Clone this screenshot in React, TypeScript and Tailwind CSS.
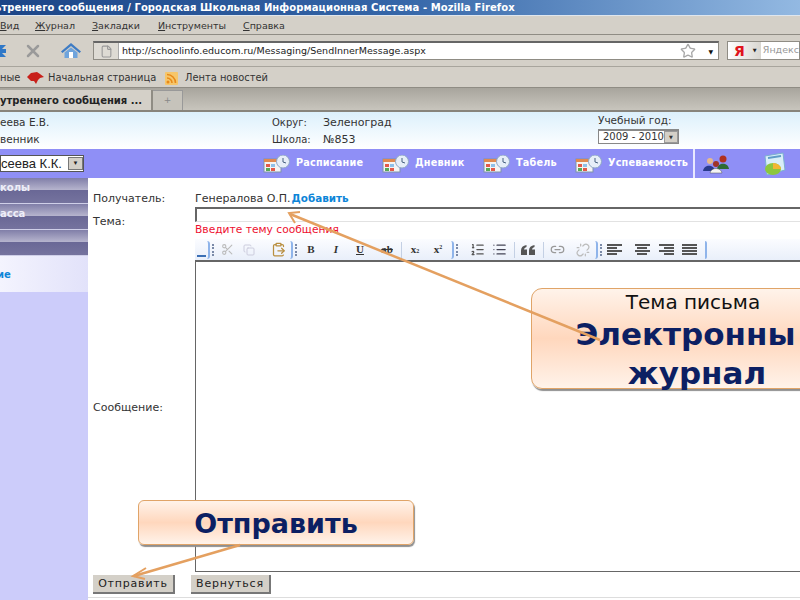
import React from 'react';
import { Star, X, File, Scissors, Copy, ClipboardPaste, ListOrdered, List, Link2, Unlink } from 'lucide-react';

const ScheduleIcon: React.FC = () => (
  <svg width="28" height="18" viewBox="0 0 28 18" className="shrink-0">
    <rect x="1" y="4" width="17" height="13" fill="#f4f4f4" stroke="#7f93a8" />
    <rect x="1" y="4" width="17" height="3" fill="#e08a50" />
    <rect x="3" y="9" width="4" height="3" fill="#e25a4a" />
    <rect x="8" y="9" width="4" height="3" fill="#8fc0e8" />
    <rect x="3" y="13" width="4" height="3" fill="#58a858" />
    <rect x="8" y="13" width="4" height="3" fill="#e25a4a" />
    <circle cx="20" cy="6.500" r="6.500" fill="#e6eef8" stroke="#8fa8c8" />
    <path d="M20 3v4l3 1" stroke="#46607f" fill="none" />
  </svg>
);

const PeopleIcon: React.FC = () => (
  <svg width="28" height="20" viewBox="0 0 28 20">
    <circle cx="8" cy="7" r="3" fill="#e8b98c" />
    <path d="M1 17c1-7 11-7 12 0z" fill="#2a3a8c" />
    <circle cx="21" cy="5" r="3.500" fill="#b03020" />
    <path d="M15 15c1-7 11-7 12 0z" fill="#2d6b35" />
    <circle cx="14" cy="10" r="3" fill="#a03428" />
    <path d="M8 19c1-6 11-6 12 0z" fill="#f4f4f4" stroke="#555" strokeWidth=".5" />
  </svg>
);

const ChartIcon: React.FC = () => (
  <svg width="26" height="24" viewBox="0 0 26 24">
    <path d="M4 4l18-3 2 17-18 5z" fill="#d8eef8" stroke="#7ab0d0" />
    <path d="M7 6l13-2" stroke="#5f9cc8" strokeWidth="2" />
    <ellipse cx="12" cy="17" rx="8" ry="6" fill="#8cc63f" />
    <path d="M12 17V11a8 6 0 0 1 8 6z" fill="#f2b632" />
  </svg>
);

const RssIcon: React.FC = () => (
  <svg width="13" height="13" viewBox="0 0 13 13">
    <rect width="13" height="13" rx="1" fill="#f6c66a" />
    <circle cx="3" cy="10" r="1.500" fill="#e88a1a" />
    <path d="M2 6a5 5 0 0 1 5 5M2 2.500a8.500 8.500 0 0 1 8.500 8.500" stroke="#e88a1a" strokeWidth="1.600" fill="none" />
  </svg>
);

const BirdIcon: React.FC = () => (
  <svg width="17" height="13" viewBox="0 0 17 13">
    <path d="M0 5l4-4 6-1 3 2 4 3-4 1-2 2-2 4-2-3-3 0z" fill="#c8201a" />
  </svg>
);

const HomeIcon: React.FC = () => (
  <svg width="20" height="17" viewBox="0 0 20 17">
    <path d="M10 1L0 9.500l1.500 1.500L10 4l8.500 7 1.500-1.500z" fill="#3f7cc4" />
    <path d="M3.500 10.500L10 5.500l6.500 5V16h-13z" fill="#6fa4dc" />
    <rect x="8" y="10" width="4" height="6" fill="#fff" />
  </svg>
);

const BackIcon: React.FC = () => (
  <svg width="6" height="16" viewBox="0 0 6 16">
    <path d="M0 2l6 0-4 4 4 0 0 4-4 0 4 4-6 0z" fill="#2f78c8" />
  </svg>
);

const QuoteIcon: React.FC = () => (
  <svg width="15" height="10" viewBox="0 0 15 10">
    <path d="M0 10V5.500C0 2.500 2 .5 5.500 0v2C4 2.500 3.200 3.500 3 4.500h3V10zM8 10V5.500C8 2.500 10 .5 13.500 0v2c-1.500.5-2.300 1.500-2.500 2.500h3V10z" fill="#555" />
  </svg>
);

const NavItem: React.FC<{ label: string; w: string }> = ({ label, w }) => (
  <div className={`flex items-center gap-[5px] ${w}`}>
    <ScheduleIcon />
    <span className="text-[9.7px] font-bold text-white tracking-[0.2px]">{label}</span>
  </div>
);

const SideItem: React.FC<{ label: string }> = ({ label }) => (
  <div className="h-[26px] bg-[linear-gradient(#807ea8_0%,#b4b2cc_46%,#6a6896_50%,#75739e_100%)] border-b border-[#cfcfe8] text-[10px] font-bold text-[#eeeef8] pt-[3px] leading-[14px] overflow-hidden">
    {label}
  </div>
);

const Sep: React.FC<{ className: string }> = ({ className }) => (
  <div className={`w-px h-[16px] bg-[#c4d0e4] shrink-0 ${className}`} />
);

// curved end of one toolbar group, followed by the dotted grip of the next
const Bracket: React.FC<{ className?: string }> = ({ className }) => (
  <div className={`flex items-center justify-between w-[9px] h-[18px] shrink-0 ${className ?? ''}`}>
    <div className="w-[3px] h-[18px] border-r-2 border-[#8fb4ea] rounded-r" />
    <div className="h-[12px] border-l-2 border-dotted border-[#7b8aa8] mr-[2px]" />
  </div>
);

const T: React.FC<{ children: React.ReactNode; className?: string }> = ({ children, className }) => (
  <span className={`flex items-center justify-center h-[18px] shrink-0 text-[11px] font-bold font-['Liberation_Serif',serif] ${className ?? 'w-[24px] text-[#333]'}`}>
    {children}
  </span>
);

const Lines: React.FC<{ kind: 'l' | 'c' | 'r' | 'j'; className?: string }> = ({ kind, className }) => {
  const rows = kind === 'j' ? [15, 15, 15, 15] : [15, 10, 15, 10];
  const align = kind === 'c' ? 'items-center' : kind === 'r' ? 'items-end' : 'items-start';
  return (
    <div className={`w-[22px] shrink-0 flex flex-col gap-[1px] px-[3px] ${align} ${className ?? ''}`}>
      {rows.map((w, i) => (
        <div key={i} className="h-[2px] bg-[#555]" style={{ width: w }} />
      ))}
    </div>
  );
};

const Callout: React.FC<{ className: string; children: React.ReactNode }> = ({ className, children }) => (
  <div className={`absolute border border-[#e0a468] bg-[linear-gradient(#fff3ea_0%,#ffd7bd_50%,#fff3ea_100%)] shadow-[1px_2px_1px_#8f8f8f] text-center font-['DejaVu_Sans',sans-serif] ${className}`}>
    {children}
  </div>
);

const App: React.FC = () => {
  return (
    <div className="relative w-[800px] h-[600px] overflow-hidden bg-white font-['DejaVu_Sans',sans-serif] text-[#222]">
      {/* title bar */}
      <div className="h-[16px] bg-[linear-gradient(90deg,#1c4587,#3566a8_50%,#93b9e2)] border-b border-[#dfe6ee] overflow-hidden">
        <div className="text-[10px] font-bold text-white leading-[15px] tracking-[0.08px] whitespace-nowrap -ml-[5px]">
          ьтреннего сообщения / Городская Школьная Информационная Система - Mozilla Firefox
        </div>
      </div>

      {/* menu */}
      <div className="h-[19px] pt-[2px] bg-[#d4d0c8] border-b border-[#8f8c84] flex items-center text-[9.5px] text-[#333] whitespace-nowrap">
        <span className="w-[35px]"><u>В</u>ид</span>
        <span className="w-[57px]"><u>Ж</u>урнал</span>
        <span className="w-[66px]"><u>З</u>акладки</span>
        <span className="w-[85px]"><u>И</u>нструменты</span>
        <span><u>С</u>правка</span>
      </div>

      {/* nav toolbar */}
      <div className="h-[32px] bg-[#d4d0c8] border-b border-[#a8a59d] flex items-center">
        <BackIcon />
        <X size={20} strokeWidth={3} className="text-[#9a9a9a] ml-[17px] mr-[18px]" />
        <HomeIcon />
        <div className="ml-[12px] w-[626px] h-[19px] bg-white border border-[#8f8c84] border-t-2 border-t-[#666] flex items-center">
          <div className="w-[25px] h-full bg-[#dedbd4] border-r border-[#aaa] flex items-center justify-center">
            <File size={13} className="text-[#999]" />
          </div>
          <span className="ml-[3px] text-[9.5px] text-[#222] flex-1">http://schoolinfo.educom.ru/Messaging/SendInnerMessage.aspx</span>
          <Star size={16} className="text-[#a8a8a8] mr-[12px]" />
          <span className="text-[6px] text-[#111] mr-[5px]">▼</span>
        </div>
        <div className="ml-[8px] flex-1 h-[19px] bg-white border border-[#8f8c84] flex items-center overflow-hidden whitespace-nowrap">
          <div className="w-[36px] h-full bg-[linear-gradient(90deg,#fff,#d8d6d0)] flex items-center pl-[6px] gap-[8px]">
            <span className="text-[14px] font-bold text-[#e0141c] leading-none">Я</span>
            <span className="text-[5px]">▼</span>
          </div>
          <span className="ml-[2px] text-[9.5px] text-[#999]">Яндекс</span>
        </div>
      </div>

      {/* bookmarks */}
      <div className="h-[21px] pt-[2px] bg-[#d4d0c8] border-b border-[#8f8c84] flex items-center text-[9.9px] text-[#333] whitespace-nowrap">
        <span className="w-[27px]">ные</span>
        <BirdIcon />
        <span className="ml-[4px] w-[117px]">Начальная страница</span>
        <RssIcon />
        <span className="ml-[7px]">Лента новостей</span>
      </div>

      {/* tabs */}
      <div className="h-[24px] bg-[linear-gradient(#a8a59d,#c8c5bd)] border-b-2 border-[#87847c] flex items-end">
        <div className="w-[153px] h-[20px] bg-[#d4d0c8] border-r-2 border-[#8f8c84] text-[10px] font-bold text-[#222] leading-[22px] whitespace-nowrap overflow-hidden">
          утреннего сообщения ...
        </div>
        <div className="w-[30px] h-[20px] bg-[#c6c3bb] border-r border-[#999] border-t flex items-center justify-center text-[9px] text-[#888]">
          +
        </div>
      </div>

      {/* school info */}
      <div className="h-[37px] bg-[linear-gradient(#dcf0fc,#ffffff)] flex text-[10.5px] text-[#333] leading-[17px]">
        <div className="w-[272px] pt-[2px] whitespace-nowrap">
          <div>еева Е.В.</div>
          <div>венник</div>
        </div>
        <div className="w-[326px] pt-[2px] whitespace-nowrap">
          <div className="flex"><span className="w-[51px] text-[10px]">Округ:</span><span className="text-[11px]">Зеленоград</span></div>
          <div className="flex"><span className="w-[51px] text-[10px]">Школа:</span><span className="text-[11px]">№853</span></div>
        </div>
        <div className="whitespace-nowrap">
          <div>Учебный год:</div>
          <div className="w-[81px] h-[15px] bg-white border border-[#888] border-t-2 flex items-center justify-between pl-[4px] leading-none text-[10px]">
            2009 - 2010
            <span className="w-[15px] h-[12px] bg-[#d4d0c8] border border-[#999] text-[5px] flex items-center justify-center">▼</span>
          </div>
        </div>
      </div>

      {/* purple nav */}
      <div className="h-[29px] bg-[#8f8ff6] flex items-center relative">
        <div className="w-[84px] h-[17px] bg-white border border-[#555] flex items-center justify-between text-[13px] font-['Liberation_Sans',sans-serif] text-[#222] whitespace-nowrap overflow-hidden">
          <span>сеева К.К.</span>
          <span className="w-[15px] h-[13px] bg-[#d4d0c8] border border-[#777] text-[6px] flex items-center justify-center">▼</span>
        </div>
        <div className="ml-[179px] flex items-center">
          <NavItem label="Расписание" w="w-[119px]" />
          <NavItem label="Дневник" w="w-[101px]" />
          <NavItem label="Табель" w="w-[92px]" />
          <NavItem label="Успеваемость" w="w-[120px]" />
        </div>
        <div className="w-[2px] h-full bg-[#e8e8ff] -ml-[2px]" />
        <div className="ml-[7px]"><PeopleIcon /></div>
        <div className="ml-[31px]"><ChartIcon /></div>
      </div>

      {/* body */}
      <div className="flex h-[422px]">
        <div className="w-[88px] bg-[#ccccfa] shrink-0">
          <div className="bg-[linear-gradient(90deg,#f4f4fe,#e2e2fa)] h-[114px]">
            <SideItem label="колы" />
            <SideItem label="асса" />
            <SideItem label=" " />
            <div className="mt-[11px] -ml-[3px] text-[10px] font-bold text-[#0d85d8]">ие</div>
          </div>
        </div>

        <div className="flex-1 flex flex-col pl-[5px] min-w-0">
          <div className="flex items-baseline pt-[13px] h-[29px] text-[11px] leading-[14px] text-[#333] whitespace-nowrap">
            <span className="w-[102px]">Получатель:</span>
            <span>Генералова О.П.</span>
            <span className="ml-[1px] text-[10.4px] font-bold text-[#0d85d8]">Добавить</span>
          </div>
          <div className="flex flex-1 min-h-0">
            <div className="w-[102px] flex flex-col text-[11px] text-[#333]">
              <div className="pt-[8px] leading-[14px]">Тема:</div>
              <div className="mt-auto mb-[157px] leading-[14px]">Сообщение:</div>
            </div>
            <div className="flex-1 flex flex-col min-w-0">
              <div className="h-[15px] border-t-2 border-l-2 border-[#666] border-b border-b-[#e2e2e2] shrink-0" />
              <div className="text-[10.7px] leading-[13px] text-[#ee1030] mt-[1px] h-[12px] whitespace-nowrap">Введите тему сообщения</div>
              <div className="h-[21px] mt-[4px] flex items-center bg-[linear-gradient(#fbfcff,#e9effa)] whitespace-nowrap overflow-hidden pl-[2px] shrink-0">
                <div className="w-[10px] h-full flex items-end pb-[3px] shrink-0"><div className="w-[9px] h-[2px] bg-[#3b6fb5]" /></div>
                <Bracket />
                <T className="w-[22px]"><Scissors size={13} className="text-[#bbb]" /></T>
                <T className="w-[22px]"><Copy size={12} className="text-[#ccd]" /></T>
                <T className="w-[22px] ml-[7px]"><ClipboardPaste size={15} className="text-[#b98f40]" /></T>
                <Bracket className="ml-[1px]" />
                <T className="w-[24px] text-[#333]">B</T>
                <T className="w-[24px] text-[#333] ml-[1px]"><i>I</i></T>
                <T className="w-[24px] text-[#333]"><u>U</u></T>
                <T className="w-[24px] text-[#333] ml-[3px]"><s>ab</s></T>
                <Sep className="ml-[2px]" />
                <T className="w-[24px] text-[#333] ml-[1px]">x<sub className="text-[6px]">2</sub></T>
                <T className="w-[24px] text-[#333] -ml-[1px]">x<sup className="text-[6px]">2</sup></T>
                <Bracket className="ml-[1px]" />
                <T className="w-[22px] ml-[6px]"><ListOrdered size={15} className="text-[#555]" /></T>
                <T className="w-[22px]"><List size={15} className="text-[#445]" /></T>
                <Sep className="ml-[4px]" />
                <T className="w-[22px] ml-[2px]"><QuoteIcon /></T>
                <Sep className="ml-[4px]" />
                <T className="w-[22px] ml-[2px]"><Link2 size={15} className="text-[#999]" /></T>
                <T className="w-[22px] ml-[4px]"><Unlink size={14} className="text-[#bbb]" /></T>
                <Bracket className="ml-[1px]" />
                <Lines kind="l" />
                <Lines kind="c" className="ml-[5px]" />
                <Lines kind="r" className="ml-[2px]" />
                <Lines kind="j" className="ml-[2px]" />
                <div className="w-[2px] h-[18px] bg-[#8fb4ea] rounded-r ml-[4px] shrink-0" />
              </div>
              <div className="flex-1 border-t-2 border-l border-b border-[#666]" />
            </div>
          </div>
          <div className="h-[26px] mb-[2px] pt-[3px] flex gap-[16px] items-start border-b border-[#ddd] -ml-[5px] pl-[5px]">
            <button className="w-[82px] h-[19px] bg-[#d4d0c8] border-r-2 border-b-2 border-[#777] text-[11px] text-[#222] tracking-[0.8px] leading-none">Отправить</button>
            <button className="w-[80px] h-[19px] bg-[#d4d0c8] border-r-2 border-b-2 border-[#777] text-[11px] text-[#222] tracking-[0.8px] leading-none">Вернуться</button>
          </div>
        </div>
      </div>

      {/* callouts */}
      <Callout className="left-[531px] top-[288px] w-[332px] h-[101px] rounded-[11px]">
        <div className="text-[20px] leading-[20px] text-[#111] pt-[3px] box-content pr-[8px]">Тема письма</div>
        <div className="text-[31px] leading-[44px] font-bold text-[#0c1f63] pr-[23px] whitespace-nowrap">Электронны</div>
        <div className="text-[31px] leading-[34px] font-bold text-[#0c1f63]">журнал</div>
      </Callout>
      <Callout className="left-[138px] top-[500px] w-[276px] h-[45px] rounded-[6px]">
        <div className="text-[27px] leading-[45px] font-bold text-[#0c1f63]">Отправить</div>
      </Callout>

      {/* arrows */}
      <svg className="absolute left-0 top-0 pointer-events-none" width="800" height="600" viewBox="0 0 800 600">
        <g stroke="#e4a060" strokeWidth="2.500" fill="none">
          <path d="M600 340L290 214" />
          <path d="M300 212l-11 1 6 10" strokeWidth="2" />
          <path d="M240 545L134 576" />
          <path d="M146 568l-13 8 12 3" strokeWidth="2" />
        </g>
      </svg>
    </div>
  );
};

export default App;
